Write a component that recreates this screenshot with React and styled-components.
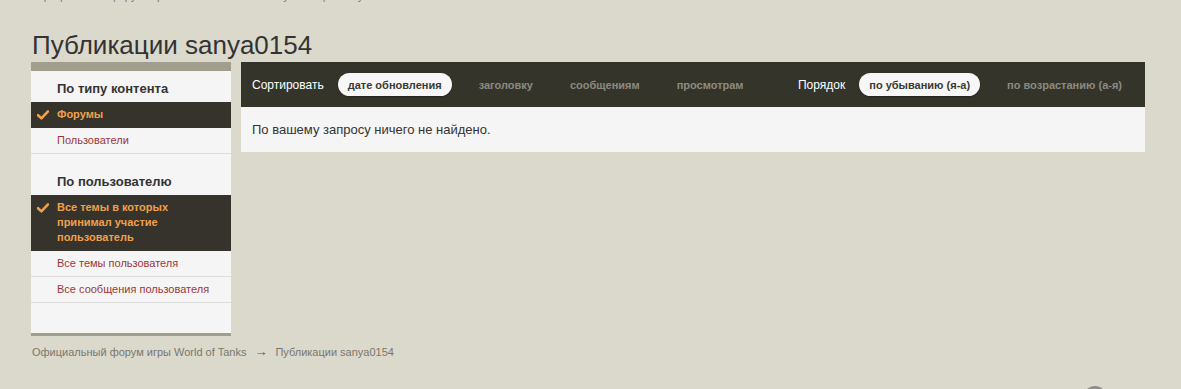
import styled, { createGlobalStyle } from "styled-components";

const GlobalStyle = createGlobalStyle`
  html, body {
    margin: 0;
    padding: 0;
    background: #dbd9cc;
    font-family: Arial, "Liberation Sans", sans-serif;
    color: #333;
  }
`;

const sortBy = ["дате обновления", "заголовку", "сообщениям", "просмотрам"];
const order = ["по убыванию (я-а)", "по возрастанию (а-я)"];

const contentTypes = [
    { title: "Форумы", active: true },
    { title: "Пользователи" }
];

const userFilters = [
    { title: "Все темы в которых принимал участие пользователь", active: true },
    { title: "Все темы пользователя" },
    { title: "Все сообщения пользователя" }
];

function Check() {
    return (
        <svg width="12" height="10" viewBox="0 0 12 10">
            <path d="M1 5.2 L4.4 8.4 L11 1.4" fill="none" stroke="#f0a04b" strokeWidth="2.6" strokeLinecap="round" strokeLinejoin="round" />
        </svg>
    );
}

function Crumbs() {
    return (
        <>
            <CrumbLink>Официальный форум игры World of Tanks</CrumbLink>
            <Arrow>→</Arrow>
            <CrumbLink>Публикации sanya0154</CrumbLink>
        </>
    );
}

function FilterGroup({ title, items }) {
    return (
        <Group>
            <GroupTitle>{title}</GroupTitle>
            {items.map((item) => (
                <Item key={item.title} $active={item.active}>
                    <Mark>{item.active && <Check />}</Mark>
                    <span>{item.title}</span>
                </Item>
            ))}
        </Group>
    );
}

export default function App() {
    return (
        <>
            <GlobalStyle />
            <Page>
                <TopCrumbs><Crumbs /></TopCrumbs>
                <Title>Публикации sanya0154</Title>

                <Layout>
                    <Sidebar>
                        <FilterGroup title="По типу контента" items={contentTypes} />
                        <FilterGroup title="По пользователю" items={userFilters} />
                    </Sidebar>

                    <Main>
                        <Bar>
                            <Options>
                                <Label>Сортировать</Label>
                                {sortBy.map((s, i) => (
                                    <Option key={s} $active={i === 0}>{s}</Option>
                                ))}
                            </Options>
                            <Options>
                                <Label>Порядок</Label>
                                {order.map((s, i) => (
                                    <Option key={s} $active={i === 0}>{s}</Option>
                                ))}
                            </Options>
                        </Bar>
                        <Empty>По вашему запросу ничего не найдено.</Empty>
                    </Main>
                </Layout>

                <BottomCrumbs><Crumbs /></BottomCrumbs>
            </Page>
            <ScrollTop />
        </>
    );
}

const Page = styled.div`
padding: 0 36px 40px 31px;
overflow: hidden;
`;

const TopCrumbs = styled.div`
margin-top: -11px;
padding-left: 1px;
font-size: 11px;
line-height: 14px;
white-space: nowrap;
`;

const BottomCrumbs = styled.div`
margin-top: 9px;
padding-left: 1px;
font-size: 11px;
line-height: 14px;
white-space: nowrap;
`;

const CrumbLink = styled.span`
color: #7a776c;
`;

const Arrow = styled.span`
color: #555;
font-size: 13px;
margin: 0 8px;
`;

const Title = styled.h1`
margin: 26px 0 0 1px;
font-size: 26px;
font-weight: normal;
line-height: 33px;
color: #333;
`;

const Layout = styled.div`
display: flex;
align-items: flex-start;
gap: 10px;
`;

const Sidebar = styled.div`
width: 200px;
flex-shrink: 0;
background: #f5f5f5;
border-top: 9px solid #a19e8e;
border-bottom: 3px solid #a19e8e;
padding-bottom: 30px;
`;

const Group = styled.div`
& + & {
    margin-top: 10px;
}
`;

const GroupTitle = styled.div`
padding: 10px 10px 5px 26px;
font-size: 13px;
font-weight: bold;
line-height: 16px;
color: #333;
`;

const Item = styled.div`
display: flex;
align-items: flex-start;
padding: 5px 16px 5px 6px;
font-size: 11px;
line-height: 15px;
font-weight: ${(p) => (p.$active ? "bold" : "normal")};
color: ${(p) => (p.$active ? "#f0a04b" : "#9c3538")};
background: ${(p) => (p.$active ? "#35332b" : "transparent")};
border-bottom: 1px solid ${(p) => (p.$active ? "#35332b" : "#dedede")};
`;

const Mark = styled.span`
width: 20px;
height: 15px;
flex-shrink: 0;
display: flex;
align-items: center;
`;

const Main = styled.div`
flex: 1;
background: #f5f5f5;
`;

const Bar = styled.div`
height: 45px;
background: #35342b;
display: flex;
align-items: center;
justify-content: space-between;
padding: 0 13px 0 11px;
`;

const Options = styled.div`
display: flex;
align-items: center;
gap: 17px;
`;

const Label = styled.span`
font-size: 12px;
color: #fff;
margin-right: -3px;
`;

const Option = styled.span`
height: 23px;
display: flex;
align-items: center;
padding: 0 10px;
border-radius: 12px;
font-size: 11px;
font-weight: bold;
color: ${(p) => (p.$active ? "#3a3a33" : "#8c8b80")};
background: ${(p) => (p.$active ? "#f7f7f7" : "transparent")};
box-shadow: ${(p) => (p.$active ? "0 1px 2px rgba(0,0,0,0.3)" : "none")};
`;

const Empty = styled.div`
height: 45px;
display: flex;
align-items: center;
padding: 0 11px;
font-size: 13px;
color: #333;
`;

const ScrollTop = styled.div`
position: fixed;
left: 1083px;
top: 386px;
width: 24px;
height: 24px;
border-radius: 50%;
background: #8e8e8a;
`;
